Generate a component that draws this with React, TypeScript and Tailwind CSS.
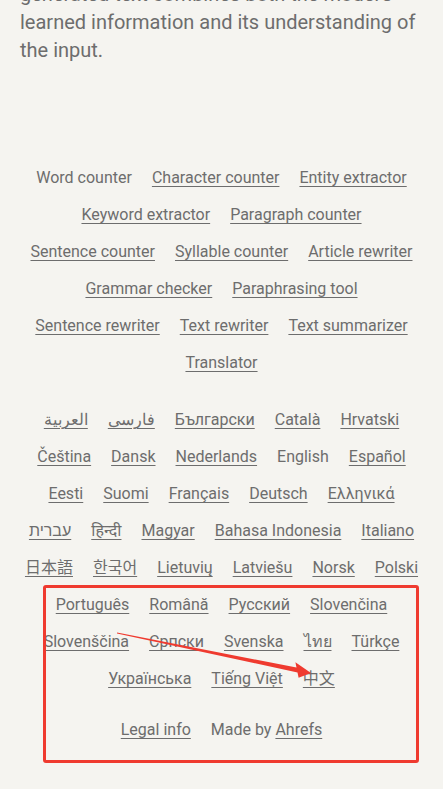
const tools = [
  { label: 'Word counter', current: true },
  { label: 'Character counter' },
  { label: 'Entity extractor' },
  { label: 'Keyword extractor' },
  { label: 'Paragraph counter' },
  { label: 'Sentence counter' },
  { label: 'Syllable counter' },
  { label: 'Article rewriter' },
  { label: 'Grammar checker' },
  { label: 'Paraphrasing tool' },
  { label: 'Sentence rewriter' },
  { label: 'Text rewriter' },
  { label: 'Text summarizer' },
  { label: 'Translator' },
];

const languages = [
  { label: 'العربية' },
  { label: 'فارسی' },
  { label: 'Български' },
  { label: 'Català' },
  { label: 'Hrvatski' },
  { label: 'Čeština' },
  { label: 'Dansk' },
  { label: 'Nederlands' },
  { label: 'English', current: true },
  { label: 'Español' },
  { label: 'Eesti' },
  { label: 'Suomi' },
  { label: 'Français' },
  { label: 'Deutsch' },
  { label: 'Ελληνικά' },
  { label: 'עברית' },
  { label: 'हिन्दी' },
  { label: 'Magyar' },
  { label: 'Bahasa Indonesia' },
  { label: 'Italiano' },
  { label: '日本語' },
  { label: '한국어' },
  { label: 'Lietuvių' },
  { label: 'Latviešu' },
  { label: 'Norsk' },
  { label: 'Polski' },
  { label: 'Português' },
  { label: 'Română' },
  { label: 'Русский' },
  { label: 'Slovenčina' },
  { label: 'Slovenščina' },
  { label: 'Српски' },
  { label: 'Svenska' },
  { label: 'ไทย' },
  { label: 'Türkçe' },
  { label: 'Українська' },
  { label: 'Tiếng Việt' },
  { label: '中文' },
];

type Item = { label: string; current?: boolean };

function LinkList({ items }: { items: Item[] }) {
  return (
    <ul className="flex flex-wrap justify-center gap-x-5 gap-y-[13px] px-5">
      {items.map((item) =>
        item.current ? (
          <li key={item.label}>
            <span>{item.label}</span>
          </li>
        ) : (
          <li key={item.label}>
            <a href="#" className="underline underline-offset-[3px] decoration-1">
              {item.label}
            </a>
          </li>
        )
      )}
    </ul>
  );
}

export default function App() {
  return (
    <div
      className="relative flex min-h-[789px] flex-col overflow-hidden bg-[#f5f4f0] text-[#6d6d6d]"
      style={{ fontFamily: 'Roboto, "Noto Sans", "Noto Sans CJK SC", sans-serif' }}
    >
      <p className="-mt-5 px-5 text-[20px] leading-[28px]">
        generated text combines both the model's learned information and its understanding of the input.
      </p>

      <footer className="mt-[102px] flex flex-col text-[16px] leading-6">
        <LinkList items={tools} />
        <div className="mt-[33px]">
          <LinkList items={languages} />
        </div>
        <div className="mt-[27px] flex justify-center gap-5">
          <a href="#" className="underline underline-offset-[3px] decoration-1">
            Legal info
          </a>
          <span>
            Made by{' '}
            <a href="#" className="underline underline-offset-[3px] decoration-1">
              Ahrefs
            </a>
          </span>
        </div>
      </footer>

      {/* annotation overlay */}
      <div className="pointer-events-none absolute left-[43px] top-[585px] h-[178px] w-[376px] rounded-[3px] border-[3px] border-[#ef3a2f]" />
      <svg className="pointer-events-none absolute left-0 top-0" width="443" height="789" viewBox="0 0 443 789">
        <polygon
          points="117,632.5 296.5,667.6 295.4,662.3 311,673 298.6,677.7 297.5,672.4 117,633.5"
          fill="#ef3a2f"
        />
      </svg>
    </div>
  );
}
